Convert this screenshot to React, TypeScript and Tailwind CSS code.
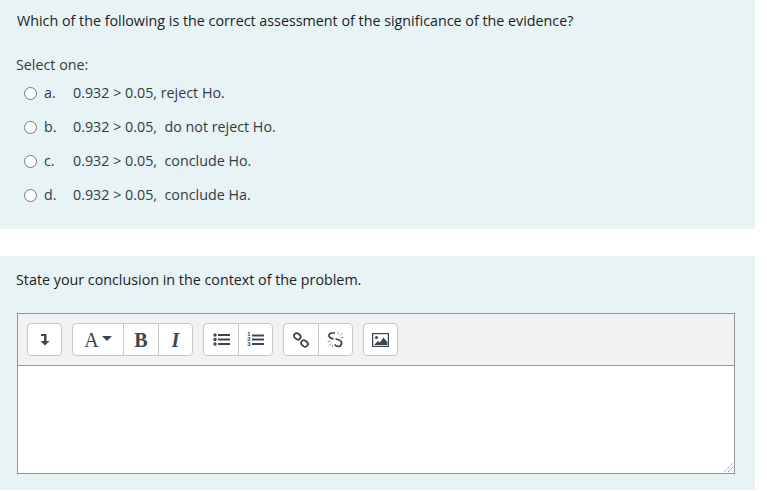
const options = [
  { letter: "a.", text: "0.932 > 0.05, reject Ho." },
  { letter: "b.", text: "0.932 > 0.05,  do not reject Ho." },
  { letter: "c.", text: "0.932 > 0.05,  conclude Ho." },
  { letter: "d.", text: "0.932 > 0.05,  conclude Ha." },
];

const btn = "flex h-full items-center justify-center";

function ImportIcon() {
  return (
    <svg width="10" height="13" viewBox="0 0 10 13" fill="#3f4a55">
      <path d="M1 1H6.5V8H9.5L5 12.5L0.5 8H4V3H1Z" />
    </svg>
  );
}

function BulletIcon() {
  return (
    <svg width="17" height="13" viewBox="0 0 17 13" fill="#3a4652">
      <circle cx="2" cy="2" r="1.7" />
      <circle cx="2" cy="6.5" r="1.7" />
      <circle cx="2" cy="11" r="1.7" />
      <rect x="5" y="1" width="12" height="2" />
      <rect x="5" y="5.5" width="12" height="2" />
      <rect x="5" y="10" width="12" height="2" />
    </svg>
  );
}

function NumberIcon() {
  return (
    <div className="flex items-center gap-px">
      <div className="flex flex-col font-['Liberation_Sans',sans-serif] text-[6px] leading-[5px] font-bold text-[#3a4652]">
        <span>1</span>
        <span>2</span>
        <span>3</span>
      </div>
      <svg width="12" height="13" viewBox="0 0 12 13" fill="#3a4652">
        <rect y="1.5" width="12" height="2" />
        <rect y="5.5" width="12" height="2" />
        <rect y="10" width="12" height="2" />
      </svg>
    </div>
  );
}

function LinkIcon() {
  return (
    <svg width="16" height="16" viewBox="0 0 16 16" fill="none" stroke="#36424e" strokeWidth="1.8">
      <rect x="0.8" y="1.6" width="7" height="5.4" rx="2.7" transform="rotate(40 4.3 4.3)" />
      <rect x="8" y="8.8" width="7" height="5.4" rx="2.7" transform="rotate(40 11.5 11.5)" />
    </svg>
  );
}

function UnlinkIcon() {
  return (
    <svg width="17" height="17" viewBox="0 0 17 17" fill="none">
      <path d="M8 2H5C3 2 1.5 3.8 2 5.3C2.5 6.8 4.5 7.5 6.5 7.8" stroke="#36424e" strokeWidth="1.7" />
      <path d="M8.5 8C11 8.5 13.5 9 14.5 11C15.2 13 13.5 15.5 11.5 15.5C10 15.5 8.5 14.7 7.5 13.5" stroke="#36424e" strokeWidth="1.7" />
      <path d="M11 0.5V3.5M13 4.5L15.5 2M14 6.5H16.5M0.5 10.5H3.5M1.5 15L4.5 12.5M5.5 14V16.5" stroke="#9aa3ab" strokeWidth="1" />
    </svg>
  );
}

function ImageIcon() {
  return (
    <svg width="17" height="14" viewBox="0 0 17 14">
      <rect x="0.6" y="0.6" width="15.8" height="12.8" fill="#fff" stroke="#3a4652" strokeWidth="1.2" />
      <circle cx="4.5" cy="4.5" r="1.6" fill="#3a4652" />
      <path d="M2 12L6 8L8 9.5L11.5 4.5L15.2 9V12Z" fill="#3a4652" />
    </svg>
  );
}

export default function App() {
  return (
    <div className="h-[491px] w-[767px] overflow-hidden bg-white font-['Open_Sans','Noto_Sans',sans-serif] text-[14.3px] text-[#373a3c]">
      <div className="h-[229px] w-[755px] bg-[#e7f3f5] pt-[10px] pl-[17px]">
        <p className="leading-[21px] text-[#1d2125]">
          Which of the following is the correct assessment of the significance of the evidence?
        </p>
        <p className="mt-[23px] -ml-px leading-[21px]">Select one:</p>
        <div className="mt-px flex flex-col">
          {options.map((o) => (
            <div key={o.letter} className="flex h-[34px] items-center pl-[7px]">
              <span className="h-[13px] w-[13px] rounded-full border border-[#767676] bg-white" />
              <span className="ml-[7px] w-[29px]">{o.letter}</span>
              <span className="whitespace-pre">{o.text}</span>
            </div>
          ))}
        </div>
      </div>

      <div className="mt-[27px] h-[234px] w-[755px] bg-[#e7f3f5] pt-[13px] pl-[17px]">
        <p className="-ml-px leading-[21px] text-[#1d2125]">State your conclusion in the context of the problem.</p>
        <div className="mt-[23px] w-[718px] border border-[#8f959e]">
          <div className="flex h-[52px] items-start gap-[10px] border-b border-[#8f959e] bg-[#f2f2f2] pt-[9px] pl-[9px]">
            <div className="h-[33px] w-[35px] rounded-[4px] border border-[#c8c8c8] bg-white">
              <div className={btn}><ImportIcon /></div>
            </div>
            <div className="flex h-[33px] w-[121px] rounded-[4px] border border-[#c8c8c8] bg-white font-['Liberation_Serif',serif] text-[20px] text-[#3a4652]">
              <div className={`${btn} w-[51px] gap-[3px] border-r border-[#c8c8c8]`}>
                <span>A</span>
                <span className="mt-[-2px] h-0 w-0 border-x-[5px] border-t-[5px] border-x-transparent border-t-[#3a4652]" />
              </div>
              <div className={`${btn} w-[35px] border-r border-[#c8c8c8] font-bold`}>B</div>
              <div className={`${btn} flex-1 font-bold italic`}>I</div>
            </div>
            <div className="flex h-[33px] w-[70px] rounded-[4px] border border-[#c8c8c8] bg-white">
              <div className={`${btn} w-[35px] border-r border-[#c8c8c8]`}><BulletIcon /></div>
              <div className={`${btn} flex-1`}><NumberIcon /></div>
            </div>
            <div className="flex h-[33px] w-[70px] rounded-[4px] border border-[#c8c8c8] bg-white">
              <div className={`${btn} w-[35px] border-r border-[#c8c8c8]`}><LinkIcon /></div>
              <div className={`${btn} flex-1`}><UnlinkIcon /></div>
            </div>
            <div className="h-[33px] w-[35px] rounded-[4px] border border-[#c8c8c8] bg-white">
              <div className={btn}><ImageIcon /></div>
            </div>
          </div>
          <div className="relative h-[107px] bg-white">
            <svg className="absolute right-[1px] bottom-[1px]" width="9" height="9" viewBox="0 0 9 9" stroke="#777" strokeWidth="1" strokeDasharray="1 1">
              <path d="M0 9L9 0M4 9L9 4" />
            </svg>
          </div>
        </div>
      </div>
    </div>
  );
}
